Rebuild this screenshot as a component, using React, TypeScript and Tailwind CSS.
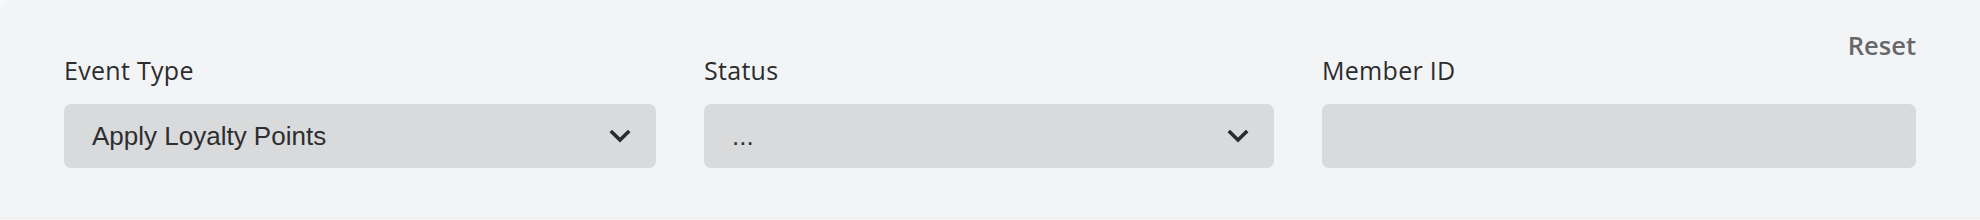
import React from "react";

function Chevron() {
  return (
    <svg width="22" height="14" viewBox="0 0 22 14" fill="none" className="shrink-0">
      <polyline points="1.8,2 11,11 20.2,2" stroke="#2a2b2e" strokeWidth="3.6" strokeLinecap="butt" strokeLinejoin="miter" />
    </svg>
  );
}

interface FieldProps {
  label: string;
  value?: string;
  select?: boolean;
}

function Field({ label, value, select }: FieldProps) {
  return (
    <div className="flex flex-col">
      <label className="text-[25px] leading-[24px] tracking-[0.3px] text-[#2b2c2e] mb-[22px] font-['Open_Sans',sans-serif]">
        {label}
      </label>
      <div className="h-[64px] rounded-[7px] bg-[#d9dadc] flex items-center justify-between pl-[28px] pr-[25px]">
        <span className="text-[26px] text-[#2d2e30] font-['Liberation_Sans',Arial,sans-serif]">
          {value}
        </span>
        {select && <Chevron />}
      </div>
    </div>
  );
}

export default function App() {
  return (
    <div className="w-[1980px] h-[220px] bg-[#fafafb] overflow-hidden">
      <div className="h-[219px] bg-[#f3f4f6] rounded-tl-[10px] border-b border-[#ebecee] px-[64px] pt-[33px]">
        {/* Header */}
        <div className="h-[25px] flex justify-end">
          <button className="text-[25.5px] leading-[25px] font-semibold text-[#66676a] font-['Open_Sans',sans-serif]">
            Reset
          </button>
        </div>

        {/* Filters */}
        <div className="grid grid-cols-[592px_570px_594px] gap-[48px]">
          <Field label="Event Type" value="Apply Loyalty Points" select />
          <Field label="Status" value="..." select />
          <Field label="Member ID" />
        </div>
      </div>
    </div>
  );
}
